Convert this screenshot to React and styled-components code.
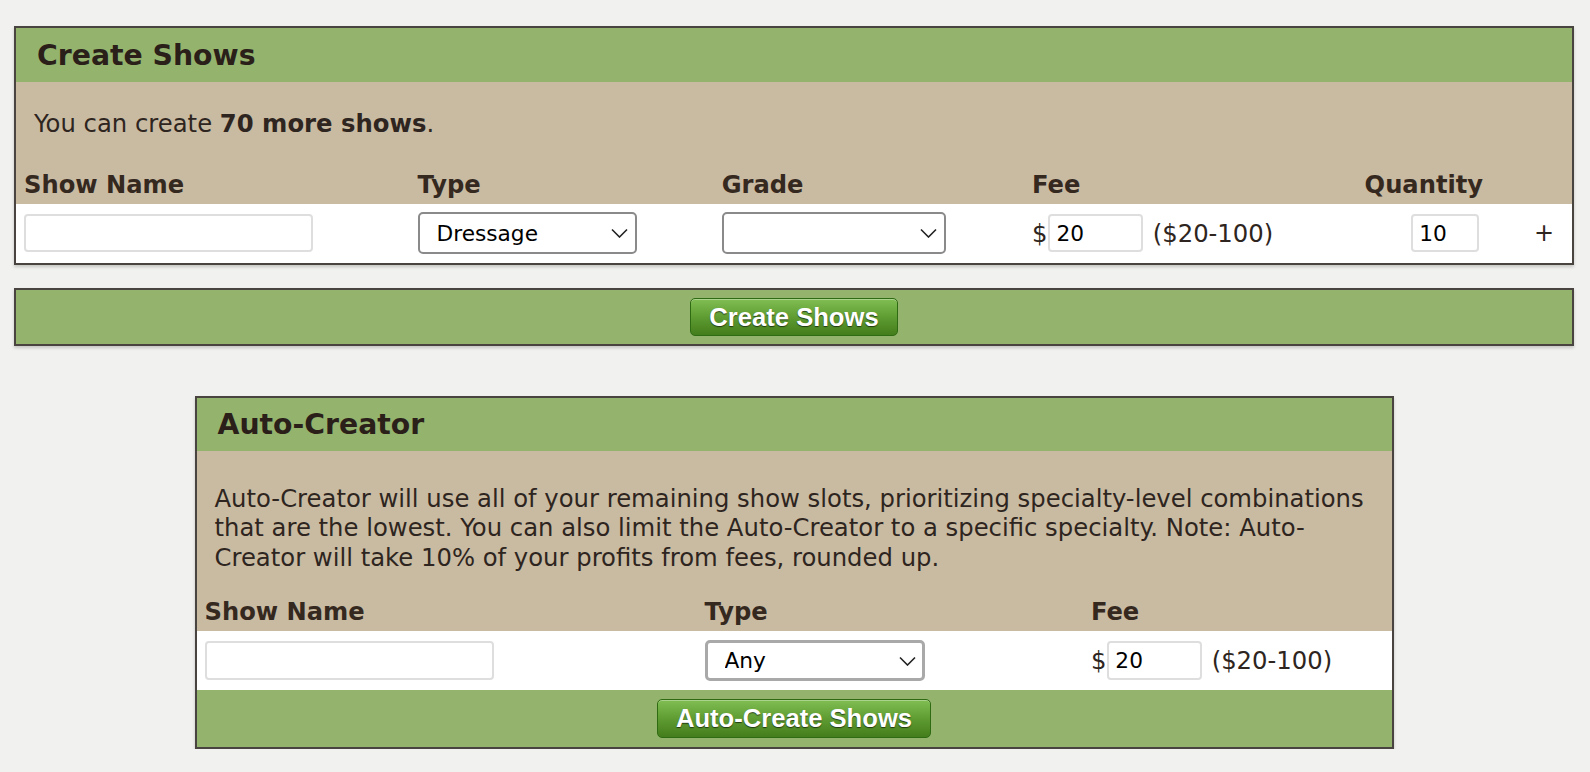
import React from "react";
import styled, { createGlobalStyle } from "styled-components";

const COLORS = {
  green: "#94b46e",
  tan: "#c9bba2",
  border: "#4a4440",
  text: "#2e2520",
  page: "#f1f1ef",
};

const GlobalStyle = createGlobalStyle`
  html, body {
    margin: 0;
    padding: 0;
    background: ${COLORS.page};
    font-family: "DejaVu Sans", Verdana, sans-serif;
    color: ${COLORS.text};
  }
`;

const Page = styled.div`
  width: 1560px;
  padding: 26px 0 0 14px;
`;

const Panel = styled.div`
  border: 2px solid ${COLORS.border};
  box-shadow: 0 2px 3px rgba(0, 0, 0, 0.18);
  width: ${(p) => (p.width ? p.width + "px" : "auto")};
  margin: ${(p) => p.margin || "0"};
  box-sizing: border-box;
`;

const PanelHeader = styled.div`
  background: ${COLORS.green};
  height: ${(p) => p.h || 54}px;
  display: flex;
  align-items: center;
  padding-left: 21px;
  font-size: 28.3px;
  font-weight: bold;
  color: #2a2019;
`;

const Intro = styled.div`
  background: ${COLORS.tan};
  padding: ${(p) => p.pad};
  font-size: 24.3px;
  line-height: 29.4px;
`;

const Grid = styled.div`
  display: grid;
  grid-template-columns: ${(p) => p.cols};
  align-items: center;
  background: ${(p) => (p.white ? "#fff" : COLORS.tan)};
  height: ${(p) => p.h}px;
`;

const Label = styled.div`
  font-size: 24.2px;
  line-height: 28px;
  font-weight: bold;
  color: #35291f;
  padding-left: 8px;
  align-self: end;
  padding-bottom: 5px;
`;

const Cell = styled.div`
  padding-left: 8px;
  display: flex;
  align-items: center;
  justify-content: ${(p) => (p.center ? "center" : "flex-start")};
  font-size: 24.3px;
  gap: 10px;
`;

const TextInput = styled.input`
  box-sizing: border-box;
  width: ${(p) => p.w}px;
  height: 38.5px;
  border: 2px solid #dedede;
  border-radius: 4px;
  background: #fff;
  font-family: "DejaVu Sans", sans-serif;
  font-size: 21.7px;
  padding: 0 6px;
  color: #000;
  outline: none;
`;

const SelectWrap = styled.div`
  position: relative;
  width: ${(p) => p.w}px;
  height: 41.6px;
`;

const Select = styled.select`
  appearance: none;
  -webkit-appearance: none;
  box-sizing: border-box;
  width: 100%;
  height: 100%;
  border: ${(p) => (p.focus ? "3px solid #a9a9a9" : "2px solid #8a8a8a")};
  border-radius: 5px;
  background: #fff;
  font-family: "DejaVu Sans", sans-serif;
  font-size: 21.7px;
  padding: 0 17px;
  color: #000;
  outline: none;
`;

const Chevron = styled.svg`
  position: absolute;
  right: 9px;
  top: 16px;
  pointer-events: none;
`;

const Plus = styled.div`
  font-size: 24px;
  text-align: center;
  padding-right: 10px;
`;

const Money = styled.span`
  display: flex;
  align-items: center;
  gap: 1px;
`;

const ButtonBar = styled.div`
  background: ${COLORS.green};
  height: ${(p) => p.h}px;
  display: flex;
  align-items: center;
  justify-content: center;
`;

const Button = styled.button`
  height: ${(p) => p.h}px;
  padding: 0 18px;
  border: 1px solid #2e6b12;
  border-radius: 5px;
  background: linear-gradient(#80bd53, #5f9c32 50%, #447d1c);
  box-shadow: inset 0 1px 0 rgba(255, 255, 255, 0.35);
  color: #fff;
  font-family: "Liberation Sans", Arial, sans-serif;
  font-weight: bold;
  font-size: 25.6px;
  text-shadow: 0 1px 1px rgba(0, 0, 0, 0.6);
  cursor: pointer;
`;

const SelectBox = ({ w, value, options, focus }) => (
  <SelectWrap w={w}>
    <Select focus={focus} defaultValue={value}>
      {options.map((o) => (
        <option key={o}>{o}</option>
      ))}
    </Select>
    <Chevron width="17" height="10" viewBox="0 0 17 10">
      <path d="M1 1.5 L8.5 9 L16 1.5" fill="none" stroke="#222" strokeWidth="1.6" />
    </Chevron>
  </SelectWrap>
);

const TOP_COLS = "393.5px 304.2px 310.3px 332.6px 169.3px 1fr";
const AUTO_COLS = "500px 386.4px 1fr";

export default function App() {
  return (
    <>
      <GlobalStyle />
      <Page>
        <Panel>
          <PanelHeader>Create Shows</PanelHeader>
          <Intro pad="27px 18px 0">
            You can create <b>70 more shows</b>.
          </Intro>
          <Grid cols={TOP_COLS} h={65.3}>
            <Label>Show Name</Label>
            <Label>Type</Label>
            <Label>Grade</Label>
            <Label>Fee</Label>
            <Label>Quantity</Label>
            <div />
          </Grid>
          <Grid cols={TOP_COLS} h={59} white>
            <Cell>
              <TextInput w={289} />
            </Cell>
            <Cell>
              <SelectBox w={219} value="Dressage" options={["Dressage", "Show Jumping", "Eventing"]} />
            </Cell>
            <Cell>
              <SelectBox w={224} value="" options={[""]} />
            </Cell>
            <Cell>
              <Money>
                $ <TextInput w={94.3} defaultValue="20" />
              </Money>
              ($20-100)
            </Cell>
            <Cell center>
              <TextInput w={68} defaultValue="10" />
            </Cell>
            <Plus>+</Plus>
          </Grid>
        </Panel>

        <Panel margin="23.3px 0 0">
          <ButtonBar h={54}>
            <Button h={37.5}>Create Shows</Button>
          </ButtonBar>
        </Panel>

        <Panel width={1199} margin="50px auto 0">
          <PanelHeader h={52.7}>Auto-Creator</PanelHeader>
          <Intro pad="33px 16px 0 18px">
            Auto-Creator will use all of your remaining show slots, prioritizing specialty-level combinations
            that are the lowest. You can also limit the Auto-Creator to a specific specialty. Note: Auto-Creator
            will take 10% of your profits from fees, rounded up.
          </Intro>
          <Grid cols={AUTO_COLS} h={59.3}>
            <Label>Show Name</Label>
            <Label>Type</Label>
            <Label>Fee</Label>
          </Grid>
          <Grid cols={AUTO_COLS} h={58.8} white>
            <Cell>
              <TextInput w={289} />
            </Cell>
            <Cell>
              <SelectBox w={220} value="Any" options={["Any", "Dressage", "Show Jumping"]} focus />
            </Cell>
            <Cell>
              <Money>
                $ <TextInput w={94.3} defaultValue="20" />
              </Money>
              ($20-100)
            </Cell>
          </Grid>
          <ButtonBar h={56.8}>
            <Button h={39.5}>Auto-Create Shows</Button>
          </ButtonBar>
        </Panel>
      </Page>
    </>
  );
}
